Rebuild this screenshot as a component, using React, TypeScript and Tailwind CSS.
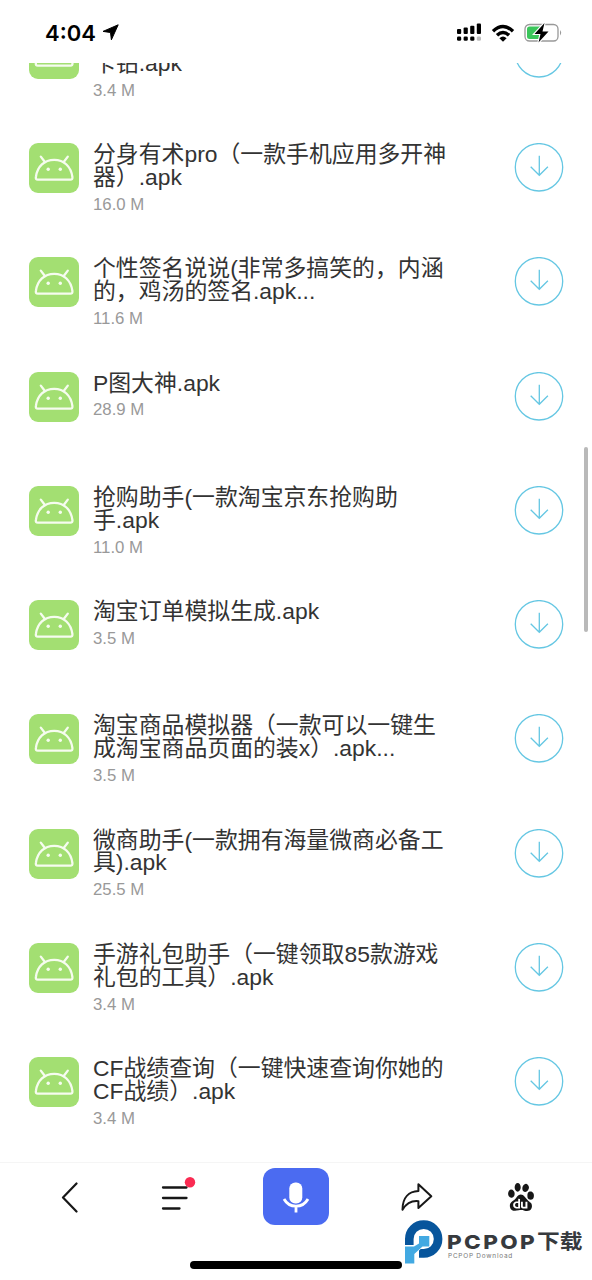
import React from 'react';
import { SiBaidu } from 'react-icons/si';

const files = [
  { lines: ['\u00a0', '卡钻.apk'], size: '3.4 M' },
  { lines: ['分身有术pro（一款手机应用多开神', '器）.apk'], size: '16.0 M' },
  { lines: ['个性签名说说(非常多搞笑的，内涵', '的，鸡汤的签名.apk...'], size: '11.6 M' },
  { lines: ['P图大神.apk'], size: '28.9 M' },
  { lines: ['抢购助手(一款淘宝京东抢购助', '手.apk'], size: '11.0 M' },
  { lines: ['淘宝订单模拟生成.apk'], size: '3.5 M' },
  { lines: ['淘宝商品模拟器（一款可以一键生', '成淘宝商品页面的装x）.apk...'], size: '3.5 M' },
  { lines: ['微商助手(一款拥有海量微商必备工', '具).apk'], size: '25.5 M' },
  { lines: ['手游礼包助手（一键领取85款游戏', '礼包的工具）.apk'], size: '3.4 M' },
  { lines: ['CF战绩查询（一键快速查询你她的', 'CF战绩）.apk'], size: '3.4 M' },
];

const ApkIcon: React.FC = () => (
  <div className="h-[50px] w-[50px] shrink-0 rounded-[9px] bg-[#a3df72]">
    <svg viewBox="0 0 50 50" className="h-full w-full" fill="none" stroke="#f6fcef" strokeWidth="2.3" strokeLinecap="round">
      <path d="M8.8 36.6H41.4Q43.8 36.6 43.4 34C42 23.5 35 16.8 25.2 16.8S8.3 23.5 6.9 34Q6.4 36.6 8.8 36.6Z" />
      <path d="M11.8 13.6L15.9 19M38.8 13.6L34.7 19" />
      <circle cx="19.2" cy="26.3" r="1.7" fill="#f6fcef" stroke="none" />
      <circle cx="31.3" cy="26.3" r="1.7" fill="#f6fcef" stroke="none" />
    </svg>
  </div>
);

const DownloadButton: React.FC = () => (
  <svg viewBox="0 0 50 50" className="ml-auto h-[50px] w-[50px] shrink-0" fill="none" stroke="#65c7e3" strokeWidth="1.3">
    <circle cx="25" cy="24.3" r="23.7" />
    <path d="M25.3 12.7V32.3M16.7 23.8L25.3 32.3L33.9 23.8" />
  </svg>
);

const StatusBar: React.FC = () => (
  <header className="flex h-[63px] shrink-0 items-center bg-white pt-0.5 pr-[30px] pl-[45px] text-black">
    <span className="font-['Inter',sans-serif] text-[22px] font-semibold leading-none">4:04</span>
    <svg viewBox="0 0 17 17" className="ml-1.5 h-[17px] w-[17px]">
      <path d="M16.2 .8L9.4 15.8L8.5 8.5L1 7.4Z" fill="currentColor" stroke="currentColor" strokeWidth="1" strokeLinejoin="round" />
    </svg>
    <svg viewBox="0 0 26 19" className="ml-auto h-[19px] w-[26px]" fill="currentColor">
      <rect x="1" y="6" width="4.2" height="5" rx="1" />
      <rect x="7.6" y="4.6" width="4.2" height="6.4" rx="1" />
      <rect x="14.2" y="2.7" width="4.2" height="8.3" rx="1" />
      <rect x="20.8" y="0.5" width="4.2" height="10.5" rx="1" />
      <rect x="1" y="13.4" width="4.2" height="4.4" rx="1.4" />
      <rect x="7.6" y="13.4" width="4.2" height="4.4" rx="1.4" />
      <rect x="14.2" y="13.4" width="4.2" height="4.4" rx="1.4" />
      <rect x="20.8" y="13.4" width="4.2" height="4.4" rx="1.4" opacity="0.25" />
    </svg>
    <svg viewBox="0 0 24 18" className="ml-[9px] h-[18px] w-6" fill="none" stroke="currentColor" strokeWidth="3.4">
      <path d="M2 7.2Q12 -2.2 22 7.2" />
      <path d="M6 11.3Q12 5.7 18 11.3" />
      <path d="M8.4 14.2Q12 11 15.6 14.2L12 17.8Z" fill="currentColor" stroke="none" />
    </svg>
    <svg viewBox="0 0 38 20" className="ml-[9px] h-5 w-[38px]">
      <rect x="1" y="1.5" width="33" height="16.5" rx="4.5" fill="none" stroke="#999" strokeWidth="1.3" />
      <path d="M36 7Q38.4 9.8 36 12.5Z" fill="#999" />
      <rect x="3" y="3.5" width="15" height="12.5" rx="2.5" fill="#3bc65b" />
      <path d="M20.5 0L10.5 11H16.5L14.5 19.5L24.5 8.5H18.5Z" fill="#000" stroke="#fff" strokeWidth="2.2" paintOrder="stroke" />
    </svg>
  </header>
);

const Watermark: React.FC = () => (
  <div className="absolute bottom-[14px] left-[404px] z-10 h-[46px] w-[180px]">
    <svg viewBox="0 0 180 46" className="h-full w-full">
      <path d="M5.3 25V19A14.4 14.4 0 1 1 19.7 33.4H15" fill="none" stroke="#07559c" strokeWidth="8.6" />
      <path d="M15 16H25.3V26.5H18.5L10.3 34V43.5H1V26.5H10L15 23.5Z" fill="#42a9e2" stroke="#fff" strokeWidth="1.2" paintOrder="stroke" />
      <text x="43" y="28.8" textLength="90" lengthAdjust="spacingAndGlyphs" fill="#373a3e" className="font-['Inter',sans-serif] text-[19.3px] font-extrabold tracking-[2px]">PCPOP</text>
      <text x="133" y="29.3" textLength="45.5" lengthAdjust="spacingAndGlyphs" fill="#373a3e" className="font-['Noto_Sans_CJK_SC',sans-serif] text-[20px] font-bold">下载</text>
      <text x="44" y="37.8" textLength="65" lengthAdjust="spacingAndGlyphs" fill="#777" className="font-['Inter',sans-serif] text-[6px] tracking-[0.7px]">PCPOP Download</text>
    </svg>
  </div>
);

const BottomBar: React.FC = () => (
  <nav className="relative h-[118px] shrink-0 border-t border-[#f5f5f5] bg-white text-[#171717]">
    <div className="flex h-[67px] items-center pr-[57px] pl-[60px]">
      <svg viewBox="0 0 20 32" className="h-8 w-5" fill="none" stroke="currentColor" strokeWidth="2.2" strokeLinecap="round" strokeLinejoin="round">
        <path d="M16.5 2.5L3 16.5L16.5 30.5" />
      </svg>
      <svg viewBox="0 0 36 42" className="ml-[81px] h-[42px] w-9" fill="none" stroke="currentColor" strokeWidth="2.3" strokeLinecap="round">
        <path d="M2 11.5H25.5M2 22H25.5M2 32.5H18.5" />
        <circle cx="29" cy="6.3" r="5.2" fill="#fa2b52" stroke="none" />
      </svg>
      <button className="ml-[66px] flex h-[57px] w-[66px] items-center justify-center rounded-[12px] bg-[#4b6bf1]">
        <svg viewBox="0 0 28 32" className="h-8 w-7" fill="none" stroke="#fff" strokeWidth="2.8">
          <rect x="7.3" y="1.5" width="13" height="21" rx="6" fill="#fff" stroke="none" />
          <path d="M2 18Q6 25.2 14 25.2T26 18M14 25V31.5" />
        </svg>
      </button>
      <svg viewBox="0 0 34 30" className="ml-[71px] h-[30px] w-[34px]" fill="none" stroke="currentColor" strokeWidth="2" strokeLinejoin="round">
        <path d="M18.4 2.2L31.3 14.3L18.4 26V19.2C11.5 18.5 6.5 21.2 2.5 27.7C2.5 15.5 9 9.5 18.4 9.1Z" />
      </svg>
      <SiBaidu className="ml-auto h-7 w-7" />
    </div>
    <div className="absolute bottom-[11.5px] left-[190px] h-[7.5px] w-[212px] rounded-full bg-black" />
    <Watermark />
  </nav>
);

const App: React.FC = () => {
  return (
    <div className="relative flex h-[1280px] w-[592px] flex-col overflow-hidden bg-white">
      <StatusBar />
      <main className="min-h-0 flex-1 overflow-hidden">
        <div className="-mt-[34.2px]">
          {files.map((file, i) => (
            <div key={i} className="flex h-[114.25px] items-start pr-7 pl-[29px]">
              <ApkIcon />
              <div className="ml-3.5 whitespace-nowrap">
                <h3 className="font-['Liberation_Sans','Noto_Sans_CJK_SC',sans-serif] text-[22.86px] leading-[22.86px] text-[#333]">
                  {file.lines.map((line) => (
                    <span key={line} className="block h-[22.86px]">{line}</span>
                  ))}
                </h3>
                <p className="mt-[5px] font-['Liberation_Sans',sans-serif] text-[16.8px] leading-[22px] text-[#999]">{file.size}</p>
              </div>
              <DownloadButton />
            </div>
          ))}
        </div>
      </main>
      <BottomBar />
      <div className="absolute top-[447px] right-1 h-[185px] w-1 rounded-full bg-[#b9b9b9]" />
    </div>
  );
};

export default App;
